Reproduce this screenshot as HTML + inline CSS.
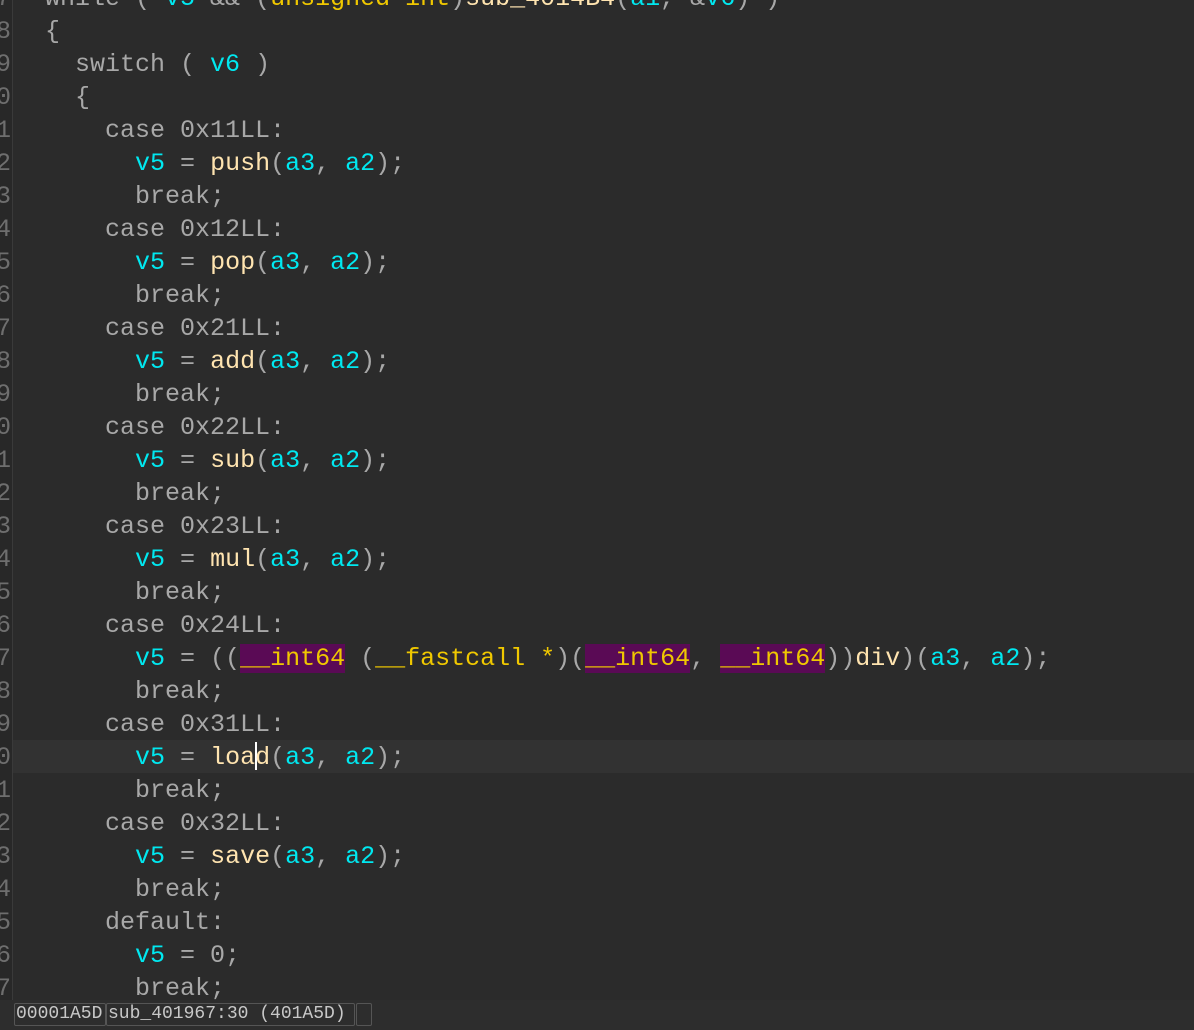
<!DOCTYPE html>
<html><head><meta charset="utf-8"><style>
html,body{margin:0;padding:0;}
body{width:1194px;height:1030px;background:#2b2b2b;position:relative;overflow:hidden;font-family:"Liberation Mono",monospace;}
.gut{position:absolute;left:0;top:0;width:12px;height:1000px;background:#282828;border-right:1px solid #3a3a3a;overflow:hidden;}
.ln{position:absolute;right:1px;font-size:25px;color:#6e6e6e;line-height:33px;height:33px;}
.hl{position:absolute;left:13px;top:740px;width:1181px;height:33px;background:#323232;}
.code{position:absolute;left:15px;top:-18px;font-size:25px;line-height:33px;color:#a8a8a8;white-space:pre;}
.c{color:#00e8f0;}
.f{color:#ffe4b0;}
.t{color:#f0c800;}
.p{background:#5a0a55;}
.cur{display:inline-block;width:0;height:28px;border-left:2px solid #fff;vertical-align:-6px;margin-right:-2px;}
.sb{position:absolute;left:0;top:1000px;width:1194px;height:30px;background:#2d2d2d;}
.bx{position:absolute;top:3px;height:21px;border:1px solid #555;border-radius:2px;font-size:18px;line-height:21px;color:#c8c8c8;padding:0 1px;white-space:pre;}
</style></head><body>
<div class="gut">
<div class="ln" style="top:-18px">7</div>
<div class="ln" style="top:15px">8</div>
<div class="ln" style="top:48px">9</div>
<div class="ln" style="top:81px">0</div>
<div class="ln" style="top:114px">1</div>
<div class="ln" style="top:147px">2</div>
<div class="ln" style="top:180px">3</div>
<div class="ln" style="top:213px">4</div>
<div class="ln" style="top:246px">5</div>
<div class="ln" style="top:279px">6</div>
<div class="ln" style="top:312px">7</div>
<div class="ln" style="top:345px">8</div>
<div class="ln" style="top:378px">9</div>
<div class="ln" style="top:411px">0</div>
<div class="ln" style="top:444px">1</div>
<div class="ln" style="top:477px">2</div>
<div class="ln" style="top:510px">3</div>
<div class="ln" style="top:543px">4</div>
<div class="ln" style="top:576px">5</div>
<div class="ln" style="top:609px">6</div>
<div class="ln" style="top:642px">7</div>
<div class="ln" style="top:675px">8</div>
<div class="ln" style="top:708px">9</div>
<div class="ln" style="top:741px">0</div>
<div class="ln" style="top:774px">1</div>
<div class="ln" style="top:807px">2</div>
<div class="ln" style="top:840px">3</div>
<div class="ln" style="top:873px">4</div>
<div class="ln" style="top:906px">5</div>
<div class="ln" style="top:939px">6</div>
<div class="ln" style="top:972px">7</div>
</div>
<div class="hl"></div>
<div class="code">  while ( <span class="c">v5</span> &amp;&amp; (<span class="t">unsigned int</span>)<span class="f">sub_4014B4</span>(<span class="c">a1</span>, &amp;<span class="c">v6</span>) )
  {
    switch ( <span class="c">v6</span> )
    {
      case 0x11LL:
        <span class="c">v5</span> = <span class="f">push</span>(<span class="c">a3</span>, <span class="c">a2</span>);
        break;
      case 0x12LL:
        <span class="c">v5</span> = <span class="f">pop</span>(<span class="c">a3</span>, <span class="c">a2</span>);
        break;
      case 0x21LL:
        <span class="c">v5</span> = <span class="f">add</span>(<span class="c">a3</span>, <span class="c">a2</span>);
        break;
      case 0x22LL:
        <span class="c">v5</span> = <span class="f">sub</span>(<span class="c">a3</span>, <span class="c">a2</span>);
        break;
      case 0x23LL:
        <span class="c">v5</span> = <span class="f">mul</span>(<span class="c">a3</span>, <span class="c">a2</span>);
        break;
      case 0x24LL:
        <span class="c">v5</span> = ((<span class="t p">__int64</span> (<span class="t">__fastcall *</span>)(<span class="t p">__int64</span>, <span class="t p">__int64</span>))<span class="f">div</span>)(<span class="c">a3</span>, <span class="c">a2</span>);
        break;
      case 0x31LL:
        <span class="c">v5</span> = <span class="f">loa<span class="cur"></span>d</span>(<span class="c">a3</span>, <span class="c">a2</span>);
        break;
      case 0x32LL:
        <span class="c">v5</span> = <span class="f">save</span>(<span class="c">a3</span>, <span class="c">a2</span>);
        break;
      default:
        <span class="c">v5</span> = 0;
        break;
</div>
<div class="sb">
<div class="bx" style="left:14px;width:88px;">00001A5D</div>
<div class="bx" style="left:106px;width:245px;">sub_401967:30 (401A5D)</div>
<div class="bx" style="left:356px;width:12px;"></div>
</div>
</body></html>
